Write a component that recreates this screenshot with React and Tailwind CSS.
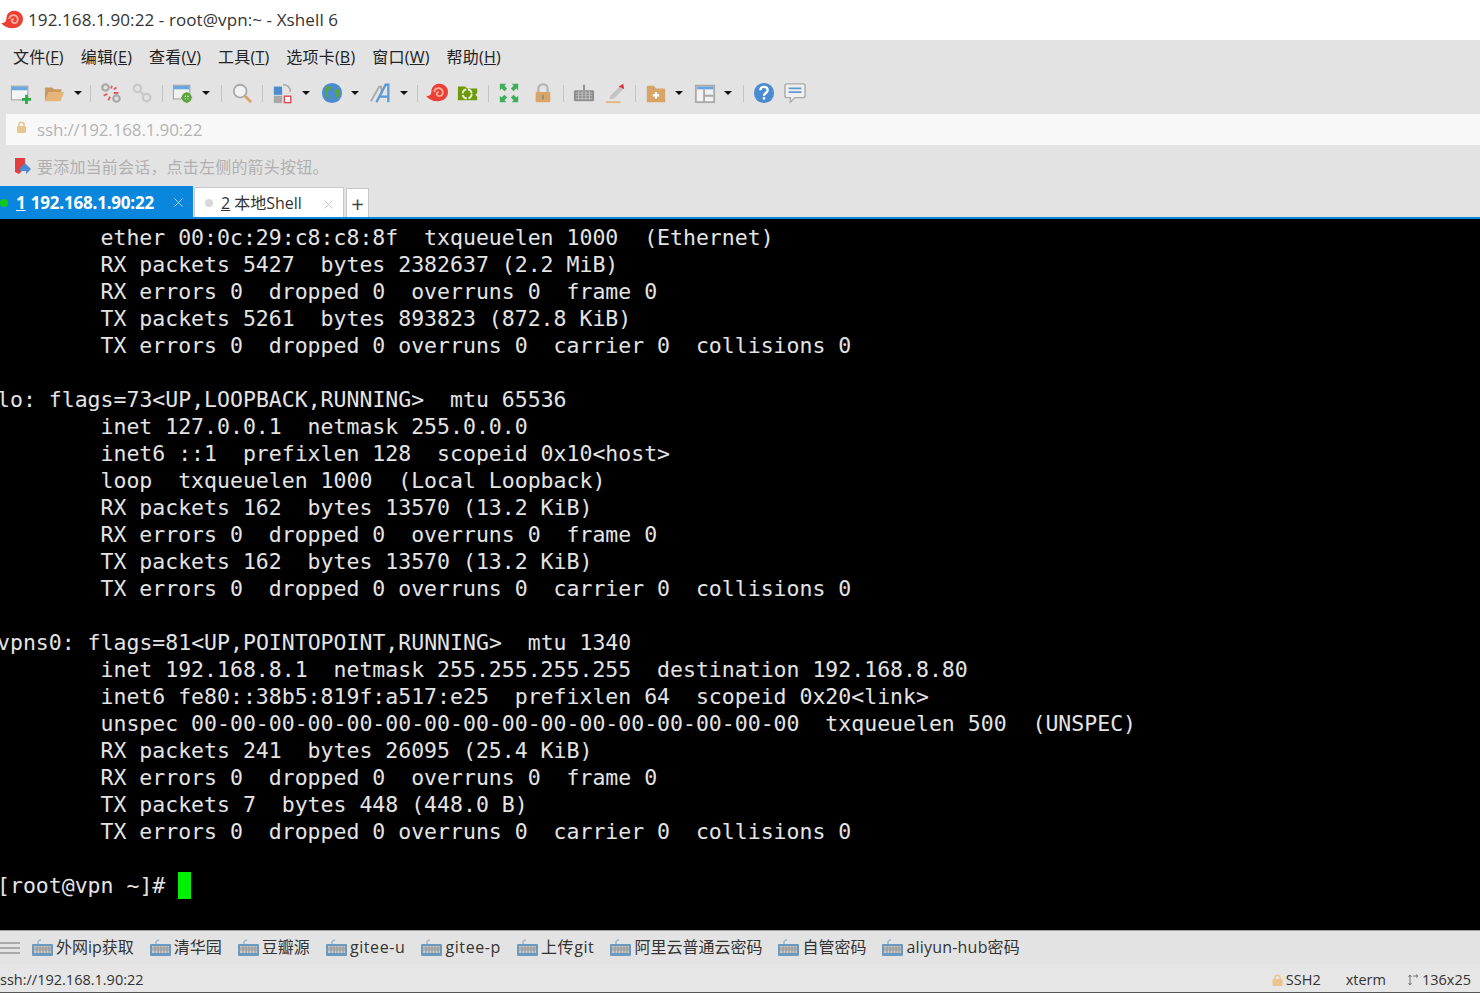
const ui = { fontFamily: '"Open Sans", "Noto Sans CJK SC", sans-serif' };

const indent = "pl-[100.5px]";

const termLines = [
  [1, "ether 00:0c:29:c8:c8:8f  txqueuelen 1000  (Ethernet)"],
  [1, "RX packets 5427  bytes 2382637 (2.2 MiB)"],
  [1, "RX errors 0  dropped 0  overruns 0  frame 0"],
  [1, "TX packets 5261  bytes 893823 (872.8 KiB)"],
  [1, "TX errors 0  dropped 0 overruns 0  carrier 0  collisions 0"],
  [0, ""],
  [0, "lo: flags=73<UP,LOOPBACK,RUNNING>  mtu 65536"],
  [1, "inet 127.0.0.1  netmask 255.0.0.0"],
  [1, "inet6 ::1  prefixlen 128  scopeid 0x10<host>"],
  [1, "loop  txqueuelen 1000  (Local Loopback)"],
  [1, "RX packets 162  bytes 13570 (13.2 KiB)"],
  [1, "RX errors 0  dropped 0  overruns 0  frame 0"],
  [1, "TX packets 162  bytes 13570 (13.2 KiB)"],
  [1, "TX errors 0  dropped 0 overruns 0  carrier 0  collisions 0"],
  [0, ""],
  [0, "vpns0: flags=81<UP,POINTOPOINT,RUNNING>  mtu 1340"],
  [1, "inet 192.168.8.1  netmask 255.255.255.255  destination 192.168.8.80"],
  [1, "inet6 fe80::38b5:819f:a517:e25  prefixlen 64  scopeid 0x20<link>"],
  [1, "unspec 00-00-00-00-00-00-00-00-00-00-00-00-00-00-00-00  txqueuelen 500  (UNSPEC)"],
  [1, "RX packets 241  bytes 26095 (25.4 KiB)"],
  [1, "RX errors 0  dropped 0  overruns 0  frame 0"],
  [1, "TX packets 7  bytes 448 (448.0 B)"],
  [1, "TX errors 0  dropped 0 overruns 0  carrier 0  collisions 0"],
  [0, ""],
];

const menus = [
  ["文件(", "F"],
  ["编辑(", "E"],
  ["查看(", "V"],
  ["工具(", "T"],
  ["选项卡(", "B"],
  ["窗口(", "W"],
  ["帮助(", "H"],
];

const quickItems = [
  { text: "外网ip获取", cls: "" },
  { text: "清华园", cls: "" },
  { text: "豆瓣源", cls: "" },
  { text: "gitee-u", cls: "tracking-[0.6px]" },
  { text: "gitee-p", cls: "tracking-[0.6px]" },
  { text: "上传git", cls: "tracking-[0.6px]" },
  { text: "阿里云普通云密码", cls: "" },
  { text: "自管密码", cls: "" },
  { text: "aliyun-hub密码", cls: "tracking-[0.2px]" },
];

function Icon({ children }) {
  return (
    <svg width="22" height="22" viewBox="0 0 24 24" className="shrink-0">
      {children}
    </svg>
  );
}

function Caret() {
  return <div className="ml-[8px] mr-[2px] w-0 h-0 border-x-[4px] border-x-transparent border-t-[4px] border-t-[#111]"></div>;
}

function Sep() {
  return <div className="w-px h-[17px] bg-[#c4c4c4]"></div>;
}

function CloseX({ color }) {
  return (
    <svg width="9" height="9" viewBox="0 0 9 9" className="absolute top-[12px] right-[10px]">
      <path d="M.5.5l8 8M8.500.5l-8 8" stroke={color} strokeWidth="1" />
    </svg>
  );
}

function Snail({ size = 24 }) {
  return (
    <svg width={size} height={size} viewBox="0 0 24 24" className="shrink-0">
      <path d="M0 15c4 1 6-1 6-6 1-5 5-7 9-7 5 0 9 4 9 9 0 6-5 10-11 10-6 0-10-2-13-6z" fill="#ec4034" />
      <path d="M9 11c0-3 3-5 6-4 3 1 4 4 3 6-1 3-5 3-6 1-1-1 0-3 2-3" fill="none" stroke="#fbb19f" strokeWidth="2" />
    </svg>
  );
}

function KeyboardSmall() {
  return (
    <svg width="23" height="18" viewBox="0 0 23 18" className="shrink-0">
      <path d="M7 5V3c0-1 1-2 3-2" fill="none" stroke="#6b9ac0" strokeWidth="1" />
      <rect x="1" y="5" width="21" height="12" rx="1" fill="#6b9ac0" />
      <rect x="3" y="7" width="17" height="7" fill="#c9c9c9" />
      <path d="M3 9h17M3 11h17M6 7v7M9 7v7M12 7v7M15 7v7M18 7v7" stroke="#8d8d8d" strokeWidth="0.8" />
    </svg>
  );
}

function Toolbar() {
  return (
    <div className="h-[38px] flex items-center pl-[10px] gap-[9px] bg-[#e3e3e3]">
      <Icon>
        <rect x="1.5" y="4.5" width="18" height="15" fill="#f4f4f4" stroke="#9a9a9a" />
        <rect x="2" y="5" width="17" height="4" fill="#6aa7de" />
        <path d="M13 19h10M18 14v10" stroke="#2fa84a" strokeWidth="3" />
      </Icon>
      <div className="flex items-center ml-[3px] -mr-[3px]">
        <Icon>
          <path d="M1 6h8l2 2h8v3H6l-5 10z" fill="#c99b61" />
          <path d="M1 21l4-10h17l-4 10z" fill="#e6b57a" />
        </Icon>
        <Caret />
      </div>
      <Sep />
      <Icon>
        <circle cx="6" cy="6" r="3.5" fill="none" stroke="#aaa" strokeWidth="2.5" />
        <circle cx="18" cy="18" r="3.5" fill="none" stroke="#aaa" strokeWidth="2.5" />
        <path d="M13 4l-1 3M18 6l-3 2M4 15l4-2M9 20l2-4M15 12l5 0" stroke="#e9555c" strokeWidth="2" />
      </Icon>
      <Icon>
        <circle cx="7" cy="7" r="4" fill="none" stroke="#c9c9c9" strokeWidth="2.5" />
        <circle cx="17" cy="17" r="4" fill="none" stroke="#c9c9c9" strokeWidth="2.5" />
        <path d="M10 10l4 4" stroke="#c9c9c9" strokeWidth="2.5" />
      </Icon>
      <Sep />
      <div className="flex items-center">
        <Icon>
          <rect x="1.5" y="3.5" width="18" height="15" fill="#f0f0f0" stroke="#9a9a9a" />
          <rect x="2" y="4" width="17" height="4" fill="#6aa7de" />
          <circle cx="16" cy="17" r="4" fill="none" stroke="#5aa63c" strokeWidth="3" />
          <path d="M16 11v12M10 17h12" stroke="#5aa63c" strokeWidth="1.5" />
        </Icon>
        <Caret />
      </div>
      <Sep />
      <Icon>
        <circle cx="10" cy="10" r="7" fill="#f2f2f2" stroke="#aaa" strokeWidth="2" />
        <path d="M15 15l7 7" stroke="#d9a468" strokeWidth="3" />
      </Icon>
      <Sep />
      <div className="flex items-center">
        <Icon>
          <rect x="2" y="5" width="9" height="9" fill="#4a8ccf" />
          <rect x="2" y="15" width="9" height="8" fill="#a9a9a9" />
          <rect x="13.5" y="15.5" width="7" height="7" fill="#fff" stroke="#e0464c" strokeWidth="1.5" />
          <path d="M12 3c5 0 8 3 8 8" fill="none" stroke="#aaa" strokeWidth="1.5" />
        </Icon>
        <Caret />
      </div>
      <div className="flex items-center">
        <Icon>
          <circle cx="12" cy="12" r="11" fill="#4a8ccf" />
          <path d="M6 5c4-2 6 1 4 3-1 2-4 1-4 4 0 2 3 3 3 6-3-1-7-6-3-13zM15 8c3-1 6 1 6 5-2 3-3 4-5 5-1-3 2-4 0-6-1-1-2-2-1-4z" fill="#5aa63c" />
        </Icon>
        <Caret />
      </div>
      <div className="flex items-center">
        <Icon>
          <path d="M1 21L10 5h2l1 8" fill="none" stroke="#a9a9a9" strokeWidth="2" />
          <path d="M7 22L17 3h3v19M11 16h9" fill="none" stroke="#5d9bd5" strokeWidth="2.5" />
        </Icon>
        <Caret />
      </div>
      <div className="-ml-[2px]"><Sep /></div>
      <div className="-ml-[1px]"><Snail size={22} /></div>
      <Icon>
        <path d="M1 5h8l2 2h11v5l-2 2 2 2v4H1z" fill="#6f9a0e" />
        <circle cx="11" cy="13" r="5" fill="none" stroke="#eef3d8" strokeWidth="2" strokeDasharray="6 2" />
      </Icon>
      <Sep />
      <Icon>
        <path d="M2 9V2h7L7 4l3 3-3 3-3-3zM22 9V2h-7l2 2-3 3 3 3 3-3zM2 15v7h7l-2-2 3-3-3-3-3 3zM22 15v7h-7l2-2-3-3 3-3 3 3z" fill="#3eb05a" />
      </Icon>
      <div className="ml-[3px]">
        <Icon>
          <path d="M7 12V7c0-6 10-6 10 0v5" fill="none" stroke="#b5b5b5" strokeWidth="2.5" />
          <rect x="4" y="11" width="16" height="11" rx="1" fill="#d9a468" />
          <rect x="11" y="14" width="2" height="5" fill="#8e8e8e" />
        </Icon>
      </div>
      <Sep />
      <Icon>
        <path d="M12 3v6" stroke="#888" strokeWidth="2" />
        <rect x="1" y="9" width="22" height="12" rx="1.5" fill="#8e8e8e" />
        <path d="M3 12h18M3 15h18M3 18h18M6 10v10M10 10v10M14 10v10M18 10v10" stroke="#c9c9c9" strokeWidth="0.8" />
      </Icon>
      <Icon>
        <path d="M7 15L17 5l4 3-10 10-5 1z" fill="#c4c4c4" />
        <path d="M16 5l5-3 1 6z" fill="#e5323c" />
        <path d="M2 22h16" stroke="#e6b57a" strokeWidth="2" />
      </Icon>
      <Sep />
      <div className="flex items-center">
        <Icon>
          <path d="M2 4h8l2 3h10v15H2z" fill="#d9a468" />
          <path d="M12 11v7M8.500 14.500h7" stroke="#fff" strokeWidth="2.5" />
        </Icon>
        <Caret />
      </div>
      <div className="flex items-center">
        <Icon>
          <rect x="2" y="4" width="20" height="18" fill="#f2f2f2" stroke="#a9a9a9" strokeWidth="2" />
          <rect x="3" y="5" width="18" height="3" fill="#6aa7de" />
          <path d="M11 8v14M11 15h10" stroke="#a9a9a9" strokeWidth="2" />
        </Icon>
        <Caret />
      </div>
      <Sep />
      <Icon>
        <circle cx="12" cy="12" r="11" fill="#4a8ccf" />
        <path d="M8 9c0-5 8-5 8 0 0 3-4 3-4 6" fill="none" stroke="#fff" strokeWidth="2.5" />
        <rect x="10.700" y="16.500" width="2.600" height="2.600" fill="#fff" />
      </Icon>
      <Icon>
        <path d="M3 2h18a2 2 0 0 1 2 2v11a2 2 0 0 1-2 2H12l-5 5v-5H3a2 2 0 0 1-2-2V4a2 2 0 0 1 2-2z" fill="#efefef" stroke="#a9a9a9" strokeWidth="1.500" />
        <path d="M5 7h14M5 11h14" stroke="#5d9bd5" strokeWidth="2" />
      </Icon>
    </div>
  );
}

export default function App() {
  return (
    <div className="w-[1480px] h-[1000px] bg-white overflow-hidden flex flex-col text-[#222]" style={ui}>
      <div className="h-[40px] flex items-center pl-[1px] gap-[5px] text-[17px] tracking-[0.1px] text-[#333] bg-white">
        <Snail size={22} />
        <span className="-mt-[1px]">192.168.1.90:22 - root@vpn:~ - Xshell 6</span>
      </div>

      <div className="h-[34px] flex items-center pl-[13px] gap-[17px] bg-[#e3e3e3] text-[16px] tracking-[0.2px]">
        {menus.map(([label, key]) => (
          <span key={key}>
            {label}
            <span className="underline">{key}</span>)
          </span>
        ))}
      </div>

      <Toolbar />

      <div className="h-[34px] bg-[#e3e3e3] pl-[6px] pt-[2px]">
        <div className="h-[31px] bg-[#f8f8f8] flex items-center pl-[10px] gap-[10px] text-[17px] tracking-[-0.15px] text-[#b4b4b4]">
          <svg width="11" height="12" viewBox="0 0 11 12" className="shrink-0 -mt-[5px]">
            <path d="M3 5V3.500c0-3 5-3 5 0V5" fill="none" stroke="#e6c58e" strokeWidth="1.500" />
            <rect x="1" y="5" width="9" height="7" rx="1" fill="#e6c58e" />
          </svg>
          <span className="mt-[1px]">ssh://192.168.1.90:22</span>
        </div>
      </div>

      <div className="h-[40px] bg-[#e3e3e3] flex items-center pl-[14px] gap-[5px] text-[16px] tracking-[0.2px] text-[#b0b0b0]">
        <svg width="18" height="18" viewBox="0 0 18 18" className="shrink-0">
          <path d="M1 1h10v10l-6 6-4-2z" fill="#e53d3d" />
          <path d="M6 11l5-5 6 6-5 5v-3H6z" fill="#4a8ccf" />
        </svg>
        <span className="mt-[1px]">要添加当前会话，点击左侧的箭头按钮。</span>
      </div>

      <div className="h-[31px] bg-[#e3e3e3] flex items-end">
        <div className="w-[193px] h-[31px] bg-[#0a87dc] flex items-center text-white text-[17px] font-bold relative pt-[2px]">
          <div className="w-[8px] h-[8px] rounded-full bg-[#14c814]"></div>
          <span className="ml-[8px] underline">1</span>
          <span className="ml-[5px] tracking-[-0.2px]">192.168.1.90:22</span>
          <CloseX color="#b8dcf5" />
        </div>
        <div className="w-[150px] h-[30px] ml-[1px] bg-white border border-b-0 border-[#c8c8c8] flex items-center text-[16px] text-[#333] relative pt-[1px]">
          <div className="w-[8px] h-[8px] rounded-full bg-[#d8d8d8] ml-[10px]"></div>
          <span className="ml-[8px] underline">2</span>
          <span className="ml-[4px]">本地Shell</span>
          <CloseX color="#c8c8c8" />
        </div>
        <div className="w-[23px] h-[29px] ml-[2px] bg-white border border-b-0 border-[#c8c8c8] flex items-center justify-center text-[22px] font-medium leading-none text-[#444]">+</div>
      </div>
      <div className="h-[2px] bg-[#0a87dc]"></div>

      <div
        className="h-[711px] bg-black text-[#e4e4e4] text-[21.5px] leading-[27px] overflow-hidden pt-[5px] whitespace-pre"
        style={{ fontFamily: '"DejaVu Sans Mono", monospace' }}
      >
        {termLines.map(([indented, line], i) => (
          <div key={i} className={indented ? `h-[27px] ${indent}` : "h-[27px] -ml-[3px]"}>{line}</div>
        ))}
        <div className="h-[27px] flex -ml-[3px]">
          <span>[root@vpn ~]# </span>
          <span className="w-[13px] h-[27px] bg-[#00f000]"></span>
        </div>
      </div>

      <div className="h-[34px] bg-[#e3e3e3] border-t border-[#a0a0a0] flex items-center text-[16px] text-[#333]">
        <div className="w-[20px] h-[12px] mr-[11px] flex flex-col justify-between">
          <div className="h-[2px] bg-[#aaa]"></div>
          <div className="h-[2px] bg-[#aaa]"></div>
          <div className="h-[2px] bg-[#aaa]"></div>
        </div>
        <div className="flex items-center gap-[15px]">
          {quickItems.map(item => (
            <div key={item.text} className="flex items-center gap-[2px]">
              <KeyboardSmall />
              <span className={`-mt-[2px] ${item.cls}`}>{item.text}</span>
            </div>
          ))}
        </div>
      </div>

      <div className="h-[29px] bg-[#e6e6e6] border-b border-[#555] flex items-center justify-between pt-[3px] text-[14.500px] text-[#333]">
        <span>ssh://192.168.1.90:22</span>
        <div className="flex items-center pr-[9px]">
          <svg width="11" height="12" viewBox="0 0 11 12" className="shrink-0 mr-[3px]">
            <path d="M3 5V3.500c0-3 5-3 5 0V5" fill="none" stroke="#eec48e" strokeWidth="1.500" />
            <rect x="0.500" y="5" width="10" height="7" rx="1" fill="#eec48e" />
          </svg>
          <span>SSH2</span>
          <span className="ml-[25px]">xterm</span>
          <svg width="12" height="12" viewBox="0 0 12 12" className="shrink-0 ml-[21px] mr-[3px]">
            <path d="M3 1v10M1.500 3L3 1l1.500 2M1.500 9L3 11l1.500-2M6 2h5M9 .5L11 2 9 3.500" fill="none" stroke="#777" strokeWidth="1" />
          </svg>
          <span>136x25</span>
        </div>
      </div>
    </div>
  );
}
